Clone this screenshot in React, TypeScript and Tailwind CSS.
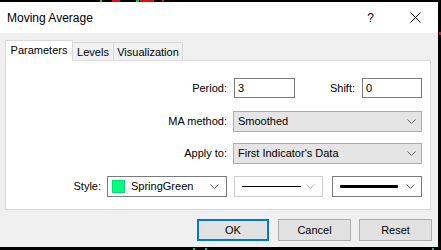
import React from "react";

const Chevron = ({ color = "#606060" }: { color?: string }) => (
  <svg width="9" height="5" viewBox="0 0 9 5" className="shrink-0">
    <polyline points="0.5,0.5 4.5,4.5 8.5,0.5" fill="none" stroke={color} strokeWidth="1" />
  </svg>
);

export default function App() {
  const font = { fontFamily: '"Liberation Sans", Arial, sans-serif' };
  return (
    <div className="relative w-[441px] h-[250px] bg-black overflow-hidden" style={font}>
      {/* chart bits peeking around the dialog */}
      <span className="absolute left-[112px] top-0 w-[8px] h-[2px] bg-[#e01010]" />
      <span className="absolute left-[100px] top-0 w-[2px] h-[2px] bg-[#10c040]" />
      <span className="absolute left-[140px] top-0 w-[14px] h-[2px] bg-[#e01010]" />
      <span className="absolute left-[136px] top-0 w-[3px] h-[2px] bg-[#10c040]" />
      <span className="absolute left-[162px] top-0 w-[2px] h-[2px] bg-[#e01010]" />
      <span className="absolute left-[193px] top-[248px] w-[2px] h-[2px] bg-[#10c040]" />
      <span className="absolute left-[205px] top-[248px] w-[2px] h-[2px] bg-[#10c040]" />
      <span className="absolute left-[432px] top-[248px] w-[2px] h-[2px] bg-[#10c040]" />
      <span className="absolute left-[439px] top-[32px] w-[2px] h-[3px] bg-[#e01010]" />

      <div className="mt-[2px] w-[438px] h-[245px] bg-[#f0f0f0] flex flex-col">
        {/* title bar */}
        <div className="h-[31px] bg-white flex items-center shrink-0">
          <span className="ml-[7px] text-[12px] text-black leading-none">Moving Average</span>
          <span className="ml-auto text-[12px] text-black leading-none">?</span>
          <svg width="11" height="11" viewBox="0 0 11 11" className="ml-[36px] mr-[17px]">
            <line x1="0.5" y1="0.5" x2="10.5" y2="10.5" stroke="#000" strokeWidth="1" />
            <line x1="10.5" y1="0.5" x2="0.5" y2="10.5" stroke="#000" strokeWidth="1" />
          </svg>
        </div>

        {/* body */}
        <div className="flex flex-col pl-[5px] pt-[7px] text-[11px] text-black">
          {/* tabs */}
          <div className="flex items-end h-[20px]">
            <div className="relative z-10 -mb-px h-[21px] w-[68px] bg-white border-x border-t border-[#d9d9d9] flex items-center justify-center pb-[1px]">
              Parameters
            </div>
            <div className="h-[18px] w-[41px] bg-[#f0f0f0] border-t border-r border-[#d9d9d9] flex items-center justify-center pt-[1px]">
              Levels
            </div>
            <div className="h-[18px] w-[69px] bg-[#f0f0f0] border-t border-r border-[#d9d9d9] flex items-center justify-center pt-[1px]">
              Visualization
            </div>
          </div>

          {/* panel */}
          <div className="w-[426px] h-[150px] bg-white border border-[#d9d9d9] flex flex-col pt-[17px]">
            {/* Period / Shift */}
            <div className="flex items-center h-[20px]">
              <div className="w-[221px] text-right">Period:</div>
              <div className="ml-[7px] w-[61px] h-[20px] border border-[#7a7a7a] bg-white flex items-center pl-[3px]">3</div>
              <div className="w-[60px] text-right">Shift:</div>
              <div className="ml-[7px] w-[60px] h-[20px] border border-[#7a7a7a] bg-white flex items-center pl-[3px]">0</div>
            </div>
            {/* MA method */}
            <div className="flex items-center h-[21px] mt-[13px]">
              <div className="w-[221px] text-right">MA method:</div>
              <div className="ml-[6px] w-[189px] h-[21px] border border-[#adadad] bg-[#e5e5e5] flex items-center pl-[4px] pr-[5px]">
                <span className="flex-1">Smoothed</span>
                <Chevron />
              </div>
            </div>
            {/* Apply to */}
            <div className="flex items-center h-[21px] mt-[11px]">
              <div className="w-[221px] text-right">Apply to:</div>
              <div className="ml-[6px] w-[189px] h-[21px] border border-[#adadad] bg-[#e5e5e5] flex items-center pl-[4px] pr-[5px]">
                <span className="flex-1">First Indicator's Data</span>
                <Chevron />
              </div>
            </div>
            {/* Style */}
            <div className="flex items-center h-[21px] mt-[12px]">
              <div className="w-[95px] text-right">Style:</div>
              <div className="ml-[6px] w-[120px] h-[21px] border border-[#7a7a7a] bg-white flex items-center pl-[4px] pr-[7px]">
                <span className="w-[13px] h-[13px] bg-[#00ff7f] border border-[#00e070]" />
                <span className="ml-[6px] flex-1">SpringGreen</span>
                <Chevron />
              </div>
              <div className="ml-[7px] w-[89px] h-[21px] border border-[#cccccc] bg-white flex items-center pl-[7px] pr-[7px]">
                <span className="w-[59px] h-px bg-black" />
                <span className="flex-1" />
                <Chevron color="#c0c0c0" />
              </div>
              <div className="ml-[9px] w-[90px] h-[21px] border border-[#7a7a7a] bg-white flex items-center pl-[7px] pr-[6px]">
                <span className="w-[58px] h-[3px] bg-black rounded-[1px]" />
                <span className="flex-1" />
                <Chevron />
              </div>
            </div>
          </div>

          {/* buttons */}
          <div className="flex mt-[9px] pl-[192px]">
            <div className="w-[72px] h-[22px] border-2 border-[#0078d7] bg-[#e1e1e1] flex items-center justify-center">OK</div>
            <div className="ml-[9px] w-[73px] h-[22px] border border-[#adadad] bg-[#e1e1e1] flex items-center justify-center">Cancel</div>
            <div className="ml-[8px] w-[73px] h-[22px] border border-[#adadad] bg-[#e1e1e1] flex items-center justify-center">Reset</div>
          </div>
        </div>
      </div>
    </div>
  );
}
